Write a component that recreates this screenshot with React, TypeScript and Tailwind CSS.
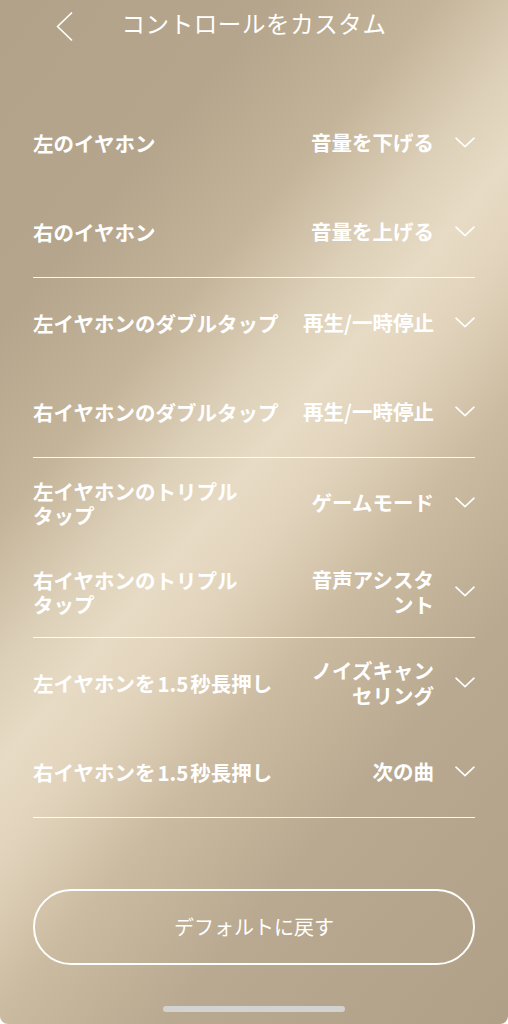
import React from 'react';

interface ControlRow {
  label: React.ReactNode[];
  value: string[];
}

const Num = ({ children }: { children: React.ReactNode }) => <span className="mx-[2px]">{children}</span>;

// Groups of two rows, separated by a thin divider
const groups: ControlRow[][] = [
  [
    { label: ['左のイヤホン'], value: ['音量を下げる'] },
    { label: ['右のイヤホン'], value: ['音量を上げる'] },
  ],
  [
    { label: ['左イヤホンのダブルタップ'], value: ['再生/一時停止'] },
    { label: ['右イヤホンのダブルタップ'], value: ['再生/一時停止'] },
  ],
  [
    { label: ['左イヤホンのトリプル', 'タップ'], value: ['ゲームモード'] },
    { label: ['右イヤホンのトリプル', 'タップ'], value: ['音声アシスタ', 'ント'] },
  ],
  [
    { label: [<>左イヤホンを<Num>1.5</Num>秒長押し</>], value: ['ノイズキャン', 'セリング'] },
    { label: [<>右イヤホンを<Num>1.5</Num>秒長押し</>], value: ['次の曲'] },
  ],
];

const ChevronDown = () => (
  <svg width="20" height="11" viewBox="0 0 20 11" fill="none" className="shrink-0">
    <path d="M1 1.2 L10 9.6 L19 1.2" stroke="white" strokeWidth="1.6" strokeLinecap="round" strokeLinejoin="round" />
  </svg>
);

const ChevronLeft = () => (
  <svg width="18" height="29" viewBox="0 0 18 29" fill="none">
    <path d="M16.5 1 L2.5 14.5 L16.5 28" stroke="white" strokeWidth="1.7" strokeLinecap="round" strokeLinejoin="round" />
  </svg>
);

const Lines = ({ lines }: { lines: React.ReactNode[] }) => (
  <>
    {lines.map((line, i) => (
      <React.Fragment key={i}>
        {i > 0 && <br />}
        {line}
      </React.Fragment>
    ))}
  </>
);

export default function App() {
  return (
    <div className="bg-white">
      <div
        className="w-full h-[1024px] flex flex-col rounded-b-[8px] overflow-hidden text-white bg-[linear-gradient(130deg,#b2a289_0%,#b5a58c_20%,#c4b49a_32%,#ddd0b8_41%,#e8dbc5_47%,#e1d3bb_53%,#cbbba1_62%,#b9a990_75%,#b0a087_100%)]"
        style={{ fontFamily: '"Noto Sans CJK JP", "Noto Sans", sans-serif' }}
      >
        {/* Header */}
        <div className="h-[50px] grid grid-cols-[1fr_auto_1fr] items-center">
          <div className="pl-[55px] pt-[2px] flex items-center">
            <ChevronLeft />
          </div>
          <h1 className="text-[23.5px] font-normal tracking-[0.6px] leading-none -mt-[3px]">コントロールをカスタム</h1>
          <div />
        </div>

        {/* Control list */}
        <div className="mx-[33px] mt-[48px]">
          {groups.map((group, gi) => (
            <div key={gi}>
              {group.map((row, ri) => (
                <div key={ri} className="h-[89.25px] flex items-center">
                  <div className="flex-1 text-[20.5px] font-semibold leading-[24px]">
                    <Lines lines={row.label} />
                  </div>
                  <div className="text-right text-[20.5px] font-semibold leading-[25px]">
                    <Lines lines={row.value} />
                  </div>
                  <div className="ml-[21px]">
                    <ChevronDown />
                  </div>
                </div>
              ))}
              <div className="h-[1.5px] bg-white/90" />
            </div>
          ))}
        </div>

        {/* Reset button */}
        <div className="mx-[33px] mt-[71px]">
          <button className="w-full h-[76px] rounded-full border-2 border-white text-[20px] font-normal text-white">
            デフォルトに戻す
          </button>
        </div>

        {/* Home indicator */}
        <div className="mt-[41px] flex justify-center">
          <div className="w-[182px] h-[6px] rounded-full bg-[#d3d2d0]" />
        </div>
      </div>
    </div>
  );
}
